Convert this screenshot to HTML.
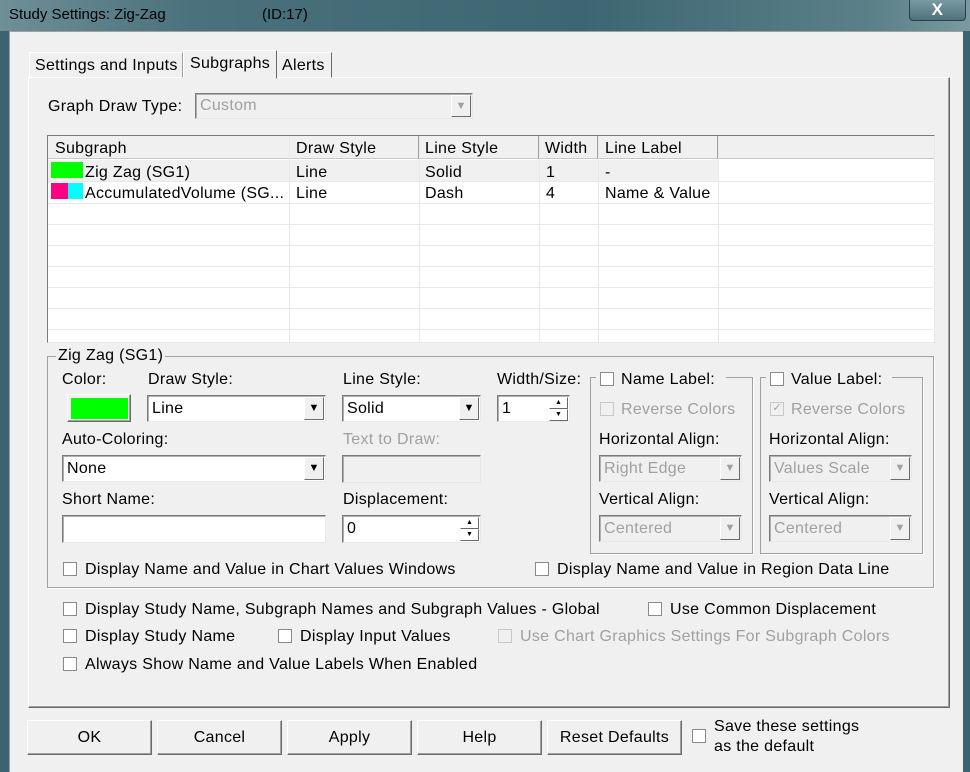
<!DOCTYPE html>
<html><head><meta charset="utf-8"><style>
*{box-sizing:border-box;margin:0;padding:0}
body{width:970px;height:772px;overflow:hidden;position:relative;background:#3b6470;font-family:"Liberation Sans",sans-serif;font-size:16px;letter-spacing:0.3px;color:#000}
.a{position:absolute;white-space:nowrap;line-height:18px}
.g{color:#a0a0a0}
.cb{position:absolute;width:14px;height:14px;background:#fff;border:1px solid #8a8a8a}
.cb.d{background:#f0f0f0;border-color:#c8c8c8}
.fld{position:absolute;background:#fff;border:1px solid;border-color:#7a7a7a #e8e8e8 #e8e8e8 #7a7a7a;box-shadow:inset 1px 1px 0 #b0b0b0;padding:4px 0 0 4px;line-height:18px;white-space:nowrap}
.fld.dis{background:#f0f0f0;color:#a0a0a0}
.btn{position:absolute;background:#f0f0f0;border:1px solid;border-color:#fff #6a6a6a #6a6a6a #fff;box-shadow:inset -1px -1px 0 #a0a0a0;text-align:center}
.dd{position:absolute;right:1px;top:1px;bottom:1px;width:20px;background:#f0f0f0;border:1px solid;border-color:#fff #6a6a6a #6a6a6a #fff;font-size:11px;text-align:center;line-height:21px;letter-spacing:0}
.grp{position:absolute;border:1px solid #a0a0a0;box-shadow:1px 1px 0 #fff}
.vl{position:absolute;top:136px;height:206px;width:1px;background:#e8e8e8}
.hl{position:absolute;left:48px;width:885px;height:1px;background:#e8e8e8}
.sp{position:absolute;right:1px;width:19px;border:1px solid;border-color:#fff #6a6a6a #6a6a6a #fff;font-size:7px;text-align:center;line-height:10px;letter-spacing:0}
</style></head><body>
<div style="position:absolute;left:0;top:0;width:970px;height:31px;background:linear-gradient(90deg,#6f8f97 0%,#4a717c 20%,#3d6672 60%,#5b8088 90%,#7a9aa0 100%)"></div>
<div class="a" style="left:9px;top:6px;font-size:15px;letter-spacing:0">Study Settings: Zig-Zag</div>
<div class="a" style="left:262px;top:6px;font-size:15px;letter-spacing:0">(ID:17)</div>
<div style="position:absolute;left:909px;top:0;width:57px;height:21px;border:1px solid #2a4048;border-top:none;border-radius:0 0 4px 4px;background:linear-gradient(#7a9aa2,#4e727c);color:#fff;text-align:center;font-weight:bold;font-size:17px;line-height:19px">X</div>
<div style="position:absolute;left:9px;top:31px;width:954px;height:741px;background:#f0f0f0;border-left:1px solid #a0a0a0;border-top:1px solid #a0a0a0"></div>
<div style="position:absolute;left:28px;top:77px;width:922px;height:631px;border:1px solid;border-color:#fff #696969 #696969 #fff;box-shadow:inset -1px -1px 0 #a0a0a0"></div>
<div style="position:absolute;left:29px;top:52px;width:154px;height:26px;border:1px solid;border-color:#fff #a0a0a0 transparent #fff"></div>
<div class="a" style="left:35px;top:57px">Settings and Inputs</div>
<div style="position:absolute;left:276px;top:52px;width:56px;height:26px;border:1px solid;border-color:#fff #696969 transparent #fff"></div>
<div class="a" style="left:282px;top:57px">Alerts</div>
<div style="position:absolute;left:183px;top:50px;width:94px;height:29px;background:#f0f0f0;border:1px solid;border-color:#fff #696969 transparent #fff"></div>
<div class="a" style="left:190px;top:55px">Subgraphs</div>
<div class="a" style="left:48px;top:98px">Graph Draw Type:</div>
<div class="fld dis" style="left:195px;top:93px;width:278px;height:26px;padding-top:3px">Custom<div class="dd" style="color:#a0a0a0">▼</div></div>
<div style="position:absolute;left:47px;top:135px;width:888px;height:208px;background:#fff;border:1px solid;border-color:#7a7a7a #e8e8e8 #e8e8e8 #7a7a7a"></div>
<div style="position:absolute;left:48px;top:136px;width:886px;height:23px;background:#f0f0f0;border-bottom:1px solid #c8c8c8"></div>
<div style="position:absolute;left:48px;top:160px;width:670px;height:21px;background:#f0f0f0"></div>
<div class="vl" style="left:289px;background:#a0a0a0;height:23px"></div>
<div class="vl" style="left:418px;background:#a0a0a0;height:23px"></div>
<div class="vl" style="left:538px;background:#a0a0a0;height:23px"></div>
<div class="vl" style="left:597px;background:#a0a0a0;height:23px"></div>
<div class="vl" style="left:717px;background:#a0a0a0;height:23px"></div>
<div class="vl" style="left:289px"></div><div class="vl" style="left:419px"></div><div class="vl" style="left:539px"></div><div class="vl" style="left:598px"></div><div class="vl" style="left:718px"></div>
<div class="hl" style="top:181px"></div><div class="hl" style="top:203px"></div><div class="hl" style="top:224px"></div><div class="hl" style="top:245px"></div><div class="hl" style="top:266px"></div><div class="hl" style="top:287px"></div><div class="hl" style="top:308px"></div><div class="hl" style="top:329px"></div>
<div class="a" style="left:55px;top:140px">Subgraph</div>
<div class="a" style="left:296px;top:140px">Draw Style</div>
<div class="a" style="left:425px;top:140px">Line Style</div>
<div class="a" style="left:545px;top:140px">Width</div>
<div class="a" style="left:605px;top:140px">Line Label</div>
<div style="position:absolute;left:51px;top:162px;width:32px;height:16px;background:#00ff00"></div>
<div style="position:absolute;left:51px;top:183px;width:17px;height:16px;background:#ff0080"></div>
<div style="position:absolute;left:68px;top:183px;width:15px;height:16px;background:#00ffff"></div>
<div class="a" style="left:85px;top:164px">Zig Zag (SG1)</div>
<div class="a" style="left:85px;top:185px">AccumulatedVolume (SG...</div>
<div class="a" style="left:296px;top:164px">Line</div><div class="a" style="left:296px;top:185px">Line</div>
<div class="a" style="left:425px;top:164px">Solid</div><div class="a" style="left:425px;top:185px">Dash</div>
<div class="a" style="left:546px;top:164px">1</div><div class="a" style="left:546px;top:185px">4</div>
<div class="a" style="left:605px;top:164px">-</div><div class="a" style="left:605px;top:185px">Name &amp; Value</div>
<div class="grp" style="left:47px;top:356px;width:887px;height:232px"></div>
<div class="a" style="left:56px;top:347px;background:#f0f0f0;padding:0 2px">Zig Zag (SG1)</div>
<div class="a" style="left:62px;top:371px">Color:</div>
<div class="btn" style="left:67px;top:394px;width:64px;height:28px"><div style="position:absolute;left:3px;top:3px;width:57px;height:21px;background:#00ff00"></div></div>
<div class="a" style="left:148px;top:371px">Draw Style:</div>
<div class="fld" style="left:147px;top:395px;width:179px;height:27px">Line<div class="dd">▼</div></div>
<div class="a" style="left:343px;top:371px">Line Style:</div>
<div class="fld" style="left:342px;top:395px;width:139px;height:27px">Solid<div class="dd">▼</div></div>
<div class="a" style="left:497px;top:371px">Width/Size:</div>
<div class="fld" style="left:497px;top:395px;width:73px;height:27px">1
<div class="sp" style="top:1px;height:12px">▲</div>
<div class="sp" style="top:13px;height:12px">▼</div></div>
<div class="a" style="left:62px;top:431px">Auto-Coloring:</div>
<div class="fld" style="left:62px;top:455px;width:264px;height:27px">None<div class="dd">▼</div></div>
<div class="a g" style="left:343px;top:431px">Text to Draw:</div>
<div class="fld dis" style="left:342px;top:455px;width:139px;height:28px"></div>
<div class="a" style="left:62px;top:491px">Short Name:</div>
<div class="fld" style="left:62px;top:515px;width:264px;height:28px"></div>
<div class="a" style="left:343px;top:491px">Displacement:</div>
<div class="fld" style="left:342px;top:515px;width:139px;height:28px">0
<div class="sp" style="top:1px;height:12px">▲</div>
<div class="sp" style="top:13px;height:12px">▼</div></div>
<div class="grp" style="left:590px;top:377px;width:163px;height:177px"></div>
<div style="position:absolute;left:596px;top:368px;width:130px;height:20px;background:#f0f0f0"></div>
<div class="cb" style="left:600px;top:372px"></div><div class="a" style="left:621px;top:371px">Name Label:</div>
<div class="cb d" style="left:600px;top:402px"></div><div class="a g" style="left:621px;top:401px">Reverse Colors</div>
<div class="a" style="left:599px;top:431px">Horizontal Align:</div>
<div class="fld dis" style="left:599px;top:455px;width:143px;height:27px">Right Edge<div class="dd" style="color:#a0a0a0">▼</div></div>
<div class="a" style="left:599px;top:491px">Vertical Align:</div>
<div class="fld dis" style="left:599px;top:515px;width:143px;height:27px">Centered<div class="dd" style="color:#a0a0a0">▼</div></div>
<div class="grp" style="left:760px;top:377px;width:163px;height:177px"></div>
<div style="position:absolute;left:766px;top:368px;width:126px;height:20px;background:#f0f0f0"></div>
<div class="cb" style="left:770px;top:372px"></div><div class="a" style="left:791px;top:371px">Value Label:</div>
<div class="cb d" style="left:770px;top:402px;color:#a0a0a0;font-size:11px;line-height:11px;text-align:center;letter-spacing:0">✓</div><div class="a g" style="left:791px;top:401px">Reverse Colors</div>
<div class="a" style="left:769px;top:431px">Horizontal Align:</div>
<div class="fld dis" style="left:769px;top:455px;width:143px;height:27px">Values Scale<div class="dd" style="color:#a0a0a0">▼</div></div>
<div class="a" style="left:769px;top:491px">Vertical Align:</div>
<div class="fld dis" style="left:769px;top:515px;width:143px;height:27px">Centered<div class="dd" style="color:#a0a0a0">▼</div></div>
<div class="cb" style="left:63px;top:562px"></div><div class="a" style="left:85px;top:561px">Display Name and Value in Chart Values Windows</div>
<div class="cb" style="left:535px;top:562px"></div><div class="a" style="left:557px;top:561px">Display Name and Value in Region Data Line</div>
<div class="cb" style="left:63px;top:602px"></div><div class="a" style="left:85px;top:601px">Display Study Name, Subgraph Names and Subgraph Values - Global</div>
<div class="cb" style="left:648px;top:602px"></div><div class="a" style="left:670px;top:601px">Use Common Displacement</div>
<div class="cb" style="left:63px;top:629px"></div><div class="a" style="left:85px;top:628px">Display Study Name</div>
<div class="cb" style="left:278px;top:629px"></div><div class="a" style="left:300px;top:628px">Display Input Values</div>
<div class="cb d" style="left:498px;top:629px"></div><div class="a g" style="left:520px;top:628px">Use Chart Graphics Settings For Subgraph Colors</div>
<div class="cb" style="left:63px;top:657px"></div><div class="a" style="left:85px;top:656px">Always Show Name and Value Labels When Enabled</div>
<div class="btn" style="left:27px;top:720px;width:125px;height:35px;line-height:33px">OK</div>
<div class="btn" style="left:157px;top:720px;width:125px;height:35px;line-height:33px">Cancel</div>
<div class="btn" style="left:287px;top:720px;width:125px;height:35px;line-height:33px">Apply</div>
<div class="btn" style="left:417px;top:720px;width:125px;height:35px;line-height:33px">Help</div>
<div class="btn" style="left:547px;top:720px;width:135px;height:35px;line-height:33px">Reset Defaults</div>
<div class="cb" style="left:692px;top:729px"></div>
<div class="a" style="left:714px;top:718px">Save these settings</div>
<div class="a" style="left:714px;top:738px">as the default</div>
</body></html>
